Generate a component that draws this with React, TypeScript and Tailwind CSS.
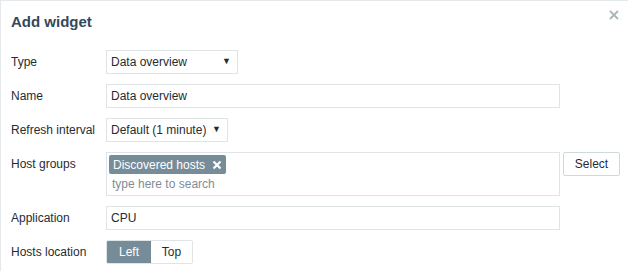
import { useState } from "react";

type Location = "left" | "top";

function Row({ label, children }: { label: string; children: React.ReactNode }) {
  return (
    <div className="flex items-start">
      <div className="w-[95px] shrink-0 leading-[24px]">{label}</div>
      {children}
    </div>
  );
}

function Select({ value, width }: { value: string; width: string }) {
  return (
    <div
      className={`${width} h-[24px] flex items-center justify-between border border-[#dfe4e7] bg-white pl-[4px] pr-[6px]`}
    >
      <span>{value}</span>
      <span className="text-[9px] text-[#1f2c33]">▼</span>
    </div>
  );
}

function TextInput({ value }: { value: string }) {
  return (
    <input
      readOnly
      value={value}
      className="w-[454px] h-[24px] border border-[#dfe4e7] bg-white px-[4px] outline-none"
    />
  );
}

export default function App() {
  const [location, setLocation] = useState<Location>("left");

  return (
    <div className="relative w-[628px] h-[271px] overflow-hidden bg-white border-l border-t border-[#e6e9eb] font-['Liberation_Sans',Arial,sans-serif] text-[12px] text-[#1f2c33]">
      <div className="h-[43px] flex items-center pl-[10px]">
        <h4 className="text-[15px] font-bold text-[#34495a]">Add widget</h4>
      </div>
      <button className="absolute right-[9px] top-[9px] w-[10px] h-[10px] text-[#aab5bb]" aria-label="Close">
        <svg viewBox="0 0 10 10" className="w-[10px] h-[10px]">
          <path d="M1 1 L9 9 M9 1 L1 9" stroke="currentColor" strokeWidth="1.8" />
        </svg>
      </button>

      <div className="flex flex-col gap-[10px] pl-[10px] pt-[6px]">
        <Row label="Type">
          <Select value="Data overview" width="w-[132px]" />
        </Row>
        <Row label="Name">
          <TextInput value="Data overview" />
        </Row>
        <Row label="Refresh interval">
          <Select value="Default (1 minute)" width="w-[122px]" />
        </Row>
        <Row label="Host groups">
          <div className="w-[454px] h-[44px] border border-[#dfe4e7] bg-white px-[2px] pt-[2px]">
            <span className="inline-flex items-center h-[19px] bg-[#768d99] text-white pl-[4px] pr-[4px] rounded-[2px] gap-[7px]">
              Discovered hosts
              <svg viewBox="0 0 10 10" className="w-[10px] h-[10px]">
                <path d="M1.5 1.5 L8.5 8.5 M8.5 1.5 L1.5 8.5" stroke="white" strokeWidth="2.2" />
              </svg>
            </span>
            <div className="pl-[3px] leading-[20px] text-[#7f8d96]">type here to search</div>
          </div>
          <button className="ml-[3px] w-[57px] h-[24px] border border-[#cfd8dc] rounded-[2px] bg-white">
            Select
          </button>
        </Row>
        <Row label="Application">
          <TextInput value="CPU" />
        </Row>
        <Row label="Hosts location">
          <div className="flex h-[24px] rounded-[2px] overflow-hidden border border-[#dfe4e7]">
            <button
              onClick={() => setLocation("left")}
              className={`w-[44px] ${location === "left" ? "bg-[#768d99] text-white" : "bg-white"}`}
            >
              Left
            </button>
            <button
              onClick={() => setLocation("top")}
              className={`w-[41px] ${location === "top" ? "bg-[#768d99] text-white" : "bg-white"}`}
            >
              Top
            </button>
          </div>
        </Row>
      </div>
    </div>
  );
}
